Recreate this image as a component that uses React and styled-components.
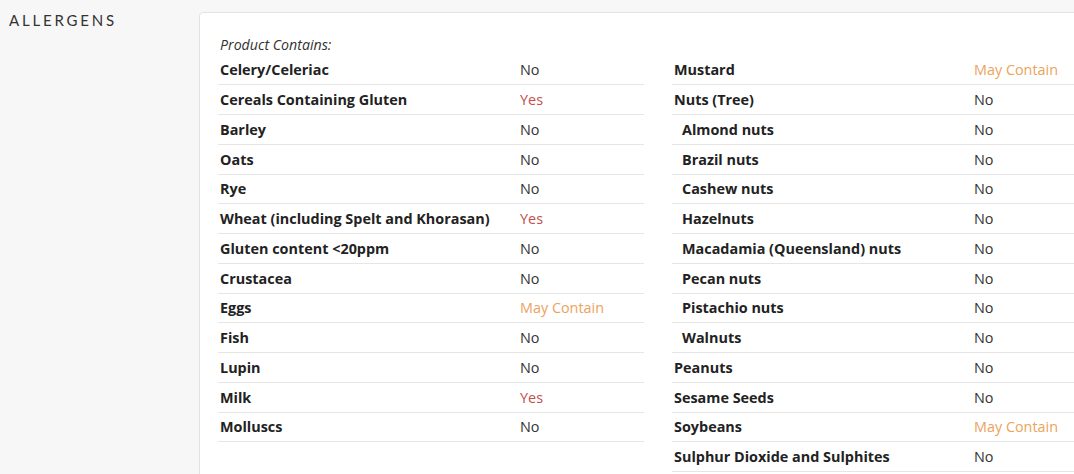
import React from "react";
import styled, { createGlobalStyle } from "styled-components";

const Global = createGlobalStyle`
  html, body {
    margin: 0;
    padding: 0;
    background: #f7f7f7;
    overflow: hidden;
  }
  body {
    font-family: "Open Sans", "Liberation Sans", sans-serif;
    color: #333;
  }
`;

const Page = styled.div`
  display: flex;
  align-items: flex-start;
  width: 100vw;
  height: 100vh;
  overflow: hidden;
`;

const Sidebar = styled.div`
  width: 190px;
  flex: none;
  padding: 11px 0 0 9px;
`;

const Title = styled.h2`
  margin: 0;
  font-family: "Lato", "Open Sans", sans-serif;
  font-weight: 400;
  font-size: 15px;
  line-height: 18px;
  letter-spacing: 2.8px;
  color: #333;
  text-transform: uppercase;
`;

const Card = styled.div`
  flex: none;
  margin-top: 12px;
  width: 920px;
  min-height: 480px;
  box-sizing: border-box;
  background: #fff;
  border: 1px solid #e3e3e3;
  border-radius: 4px;
  padding: 22px 18px 0 18px;
  display: grid;
  grid-template-columns: 426px 426px;
  column-gap: 28px;
  align-items: start;
`;

const Table = styled.div`
  display: flex;
  flex-direction: column;
`;

const Caption = styled.div`
  height: 20.5px;
  padding-left: 2px;
  font-style: italic;
  font-size: 14.2px;
  line-height: 20px;
  color: #333;
`;

const Row = styled.div`
  display: flex;
  align-items: center;
  height: 29.75px;
  box-sizing: border-box;
  border-bottom: 1px solid #e6e6e6;
  font-size: 14.4px;
  line-height: 20px;
  padding-top: 1px;
`;

const Label = styled.div`
  width: ${(p) => (p.$sub ? 292 : 300)}px;
  padding-left: ${(p) => (p.$sub ? 10 : 2)}px;
  font-weight: 700;
  color: #222;
`;

const colors = {
  No: "#333",
  Yes: "#c2504e",
  "May Contain": "#eba35d",
};

const Value = styled.div`
  color: ${(p) => colors[p.$v] || "#333"};
`;

const left = [
  ["Celery/Celeriac", "No"],
  ["Cereals Containing Gluten", "Yes"],
  ["Barley", "No"],
  ["Oats", "No"],
  ["Rye", "No"],
  ["Wheat (including Spelt and Khorasan)", "Yes"],
  ["Gluten content <20ppm", "No"],
  ["Crustacea", "No"],
  ["Eggs", "May Contain"],
  ["Fish", "No"],
  ["Lupin", "No"],
  ["Milk", "Yes"],
  ["Molluscs", "No"],
];

const right = [
  ["Mustard", "May Contain"],
  ["Nuts (Tree)", "No"],
  ["Almond nuts", "No", true],
  ["Brazil nuts", "No", true],
  ["Cashew nuts", "No", true],
  ["Hazelnuts", "No", true],
  ["Macadamia (Queensland) nuts", "No", true],
  ["Pecan nuts", "No", true],
  ["Pistachio nuts", "No", true],
  ["Walnuts", "No", true],
  ["Peanuts", "No"],
  ["Sesame Seeds", "No"],
  ["Soybeans", "May Contain"],
  ["Sulphur Dioxide and Sulphites", "No"],
];

function AllergenTable({ caption, rows }) {
  return (
    <Table>
      <Caption>{caption}</Caption>
      {rows.map(([name, v, sub]) => (
        <Row key={name}>
          <Label $sub={sub}>{name}</Label>
          <Value $v={v}>{v}</Value>
        </Row>
      ))}
    </Table>
  );
}

export default function App() {
  return (
    <>
      <Global />
      <Page>
        <Sidebar>
          <Title>Allergens</Title>
        </Sidebar>
        <Card>
          <AllergenTable caption="Product Contains:" rows={left} />
          <AllergenTable caption="" rows={right} />
        </Card>
      </Page>
    </>
  );
}
